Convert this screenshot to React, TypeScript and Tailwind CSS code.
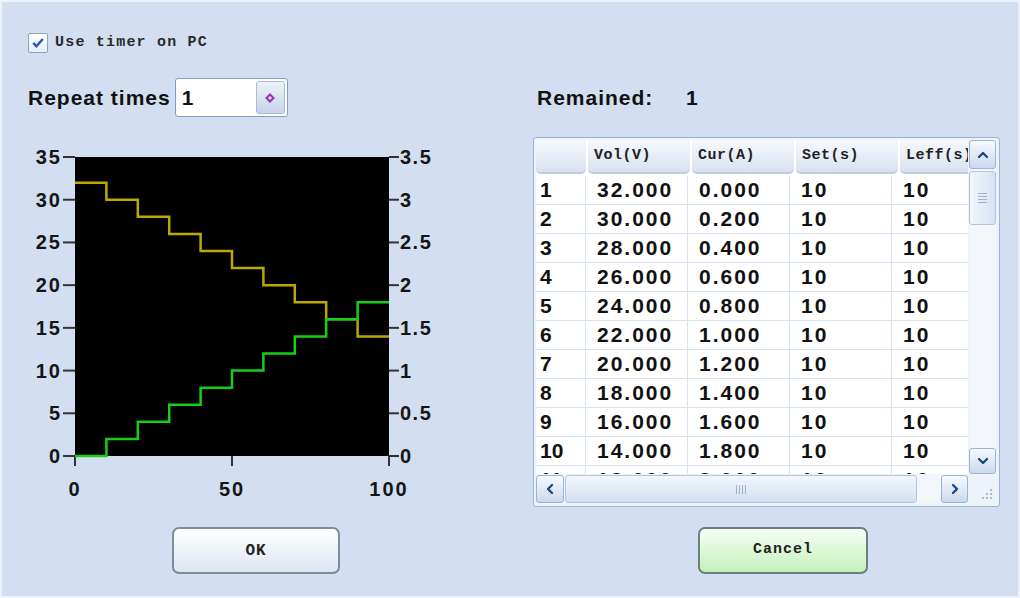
import { ChevronUp, ChevronDown, ChevronLeft, ChevronRight } from "lucide-react"

const rows = Array.from({ length: 11 }, (_, i) => ({
  n: i + 1,
  vol: (32 - 2 * i).toFixed(3),
  cur: (0.2 * i).toFixed(3),
}))

const X = (t: number) => 47 + t * 3.14
const Y = (v: number) => 311 - (v * 299) / 35

function stepPath(start: number, step: number) {
  let d = `M${X(0)} ${Y(start)}`
  for (let i = 0; i < 10; i++) {
    d += ` H${X(10 * (i + 1))}`
    if (i < 9) d += ` V${Y(start + step * (i + 1))}`
  }
  return d
}

function Chart() {
  const left = [0, 5, 10, 15, 20, 25, 30, 35]
  const right = ["0", "0.5", "1", "1.5", "2", "2.5", "3", "3.5"]
  return (
    <svg width="420" height="360" className="font-['Liberation_Sans',sans-serif] font-bold">
      <rect x={X(0)} y={Y(35)} width={X(100) - X(0)} height={Y(0) - Y(35)} fill="#000" />
      {left.map((v, i) => (
        <g key={v}>
          <line x1="35" x2="47" y1={Y(v)} y2={Y(v)} stroke="#333" strokeWidth="2" />
          <text x="34" y={Y(v) + 7} textAnchor="end" fontSize="20" fill="#151515" letterSpacing="2">
            {v}
          </text>
          <line x1="361" x2="371" y1={Y(v)} y2={Y(v)} stroke="#333" strokeWidth="2" />
          <text x="372" y={Y(v) + 7} fontSize="20" fill="#151515" letterSpacing="1.5">
            {right[i]}
          </text>
        </g>
      ))}
      {[0, 50, 100].map((t) => (
        <g key={t}>
          <line x1={X(t)} x2={X(t)} y1="311" y2="321" stroke="#333" strokeWidth="2" />
          <text x={X(t)} y="351" textAnchor="middle" fontSize="20" fill="#151515" letterSpacing="2">
            {t}
          </text>
        </g>
      ))}
      <path d={stepPath(32, -2)} fill="none" stroke="#bba800" strokeWidth="2.5" />
      <path d={stepPath(0, 2)} fill="none" stroke="#16d016" strokeWidth="2.5" />
    </svg>
  )
}

function ScrollBtn({ children, className }: { children: React.ReactNode; className?: string }) {
  return (
    <div
      className={
        "flex items-center justify-center rounded-[3px] border border-[#9fb4d2] bg-gradient-to-b from-[#f7faff] to-[#cbd9ee] " +
        (className ?? "")
      }
    >
      {children}
    </div>
  )
}

function Grip({ vertical }: { vertical?: boolean }) {
  return (
    <div className={vertical ? "flex flex-col gap-[2px]" : "flex gap-[2px]"}>
      {[0, 1, 2, 3].map((i) => (
        <div key={i} className={vertical ? "h-[1px] w-[9px] bg-[#9fb0c8]" : "h-[9px] w-[1px] bg-[#9fb0c8]"} />
      ))}
    </div>
  )
}

export default function App() {
  const widths = ["w-[50px]", "w-[102px]", "w-[102px]", "w-[102px]", "w-[76px]"]
  const heads = ["", "Vol(V)", "Cur(A)", "Set(s)", "Leff(s)"]

  return (
    <div className="w-[1020px] h-[598px] overflow-hidden border-2 border-[#edf2fa] bg-[#d3dff0] pt-[30px] pl-[26px] font-['Liberation_Sans',sans-serif] text-[#111]">
      {/* checkbox */}
      <div className="flex h-[22px] items-center gap-[7px]">
        <div className="flex h-[20px] w-[20px] items-center justify-center rounded-[2px] border border-[#8ea2c0] bg-gradient-to-b from-white to-[#e6edf8]">
          <svg width="16" height="16" viewBox="0 0 20 20">
            <path d="M4 10 L8 14 L16 5" fill="none" stroke="#2c4fc4" strokeWidth="3" />
          </svg>
        </div>
        <span className="font-['Liberation_Mono',monospace] text-[15px] font-bold tracking-[1.2px] text-[#2a2a2a]">
          Use timer on PC
        </span>
      </div>

      <div className="mt-[24px] flex">
        {/* left column */}
        <div className="w-[505px]">
          <div className="flex h-[39px] items-center gap-[4px]">
            <span className="text-[21px] font-bold tracking-[1px]">Repeat times</span>
            <div className="flex h-[39px] w-[113px] items-center rounded-[3px] border border-[#7f9cc9] bg-white pl-[6px] pr-[2px]">
              <span className="flex-1 text-[21px] font-bold">1</span>
              <div className="flex h-[33px] w-[29px] items-center justify-center rounded-[3px] border border-[#a9bcd6] bg-gradient-to-b from-[#eef3fb] to-[#c6d4e8]">
                <svg width="10" height="10" viewBox="0 0 10 10">
                  <path d="M5 1.5 L8.5 5 L5 8.5 L1.5 5 Z" fill="none" stroke="#9b2fae" strokeWidth="2" />
                </svg>
              </div>
            </div>
          </div>

          <div className="mt-[28px]">
            <Chart />
          </div>

          <button className="mt-[22px] ml-[144px] flex h-[47px] w-[168px] items-center justify-center rounded-[7px] border-2 border-[#7d8d9c] bg-gradient-to-b from-white to-[#dde5f2] font-['Liberation_Mono',monospace] text-[16px] font-bold tracking-[1px] text-[#222]">
            OK
          </button>
        </div>

        {/* right column */}
        <div>
          <div className="flex h-[39px] items-center pl-[4px]">
            <span className="w-[149px] text-[21px] font-bold tracking-[1px]">Remained:</span>
            <span className="text-[21px] font-bold">1</span>
          </div>

          <div className="mt-[20px] h-[370px] w-[467px] rounded-[3px] border border-[#9db3d3] bg-[#eef3fa] p-[2px]">
            <div className="flex h-[334px]">
              <div className="w-[432px] overflow-hidden bg-white">
                <div className="flex h-[34px] gap-[2px] bg-white">
                  {heads.map((h, i) => (
                    <div
                      key={i}
                      className={
                        widths[i] +
                        " flex items-center rounded-b-[5px] border-b-2 border-[#bfcde2] bg-gradient-to-b from-[#f7f9fd] to-[#d8e2f0] pl-[6px] font-['Liberation_Mono',monospace] text-[15px] font-bold tracking-[0.5px] text-[#222] shrink-0"
                      }
                    >
                      {h}
                    </div>
                  ))}
                </div>
                <div className="mt-[2px]">
                  {rows.map((r) => (
                    <div key={r.n} className="flex h-[29px] border-b border-[#d5e1f1]">
                      <div className="w-[50px] shrink-0 border-r border-[#d5e1f1] pl-[4px] text-[21px] font-bold leading-[27px]">
                        {r.n}
                      </div>
                      {[r.vol, r.cur, "10"].map((c, i) => (
                        <div
                          key={i}
                          className="w-[102px] shrink-0 border-r border-[#d5e1f1] pl-[11px] text-[21px] font-bold leading-[27px] tracking-[2px]"
                        >
                          {c}
                        </div>
                      ))}
                      <div className="w-[76px] shrink-0 pl-[11px] text-[21px] font-bold leading-[27px] tracking-[2px]">
                        10
                      </div>
                    </div>
                  ))}
                </div>
              </div>
              {/* vertical scrollbar */}
              <div className="ml-[1px] flex w-[27px] flex-col bg-[#f3f6fb]">
                <ScrollBtn className="h-[29px]">
                  <ChevronUp size={16} strokeWidth={3.5} color="#1b4a7a" />
                </ScrollBtn>
                <div className="mt-[2px] flex h-[54px] items-center justify-center rounded-[3px] border border-[#b3c5de] bg-gradient-to-r from-[#f3f7fd] to-[#d7e2f1]">
                  <Grip vertical />
                </div>
                <div className="flex-1" />
                <ScrollBtn className="h-[26px]">
                  <ChevronDown size={16} strokeWidth={3.5} color="#1b4a7a" />
                </ScrollBtn>
              </div>
            </div>
            {/* horizontal scrollbar */}
            <div className="mt-[1px] flex h-[28px]">
              <div className="flex w-[432px] bg-[#f3f6fb]">
                <ScrollBtn className="w-[28px]">
                  <ChevronLeft size={16} strokeWidth={3.5} color="#1b4a7a" />
                </ScrollBtn>
                <div className="ml-[1px] flex w-[352px] items-center justify-center rounded-[3px] border border-[#b3c5de] bg-gradient-to-b from-[#f3f7fd] to-[#d3dff0]">
                  <Grip />
                </div>
                <div className="flex-1" />
                <ScrollBtn className="w-[27px]">
                  <ChevronRight size={16} strokeWidth={3.5} color="#1b4a7a" />
                </ScrollBtn>
              </div>
              <div className="flex w-[28px] items-end justify-end p-[3px]">
                <svg width="12" height="12" viewBox="0 0 12 12">
                  {[
                    [10, 2],
                    [6, 6],
                    [10, 6],
                    [2, 10],
                    [6, 10],
                    [10, 10],
                  ].map(([x, y], i) => (
                    <rect key={i} x={x - 1} y={y - 1} width="2" height="2" fill="#a9b9d0" />
                  ))}
                </svg>
              </div>
            </div>
          </div>

          <button className="mt-[20px] ml-[165px] flex h-[47px] w-[170px] items-center justify-center rounded-[7px] border-2 border-[#6d7d80] bg-gradient-to-b from-[#f6fff4] to-[#c3f0bb] font-['Liberation_Mono',monospace] text-[15px] font-bold tracking-[1px] text-[#222]">
            Cancel
          </button>
        </div>
      </div>
    </div>
  )
}
